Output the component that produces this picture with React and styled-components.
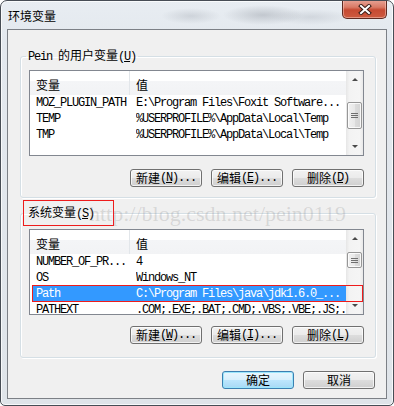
import React from "react";
import styled, { createGlobalStyle } from "styled-components";

const GlobalStyle = createGlobalStyle`
  html, body {
    margin: 0;
    padding: 0;
    background: #ffffff;
  }
  body {
    font-family: "Noto Sans CJK SC", sans-serif;
  }
  * {
    box-sizing: border-box;
  }
`;

const Window = styled.div`
  position: relative;
  width: 394px;
  height: 406px;
  display: flex;
  flex-direction: column;
  border: 1px solid #474d55;
  border-radius: 7px 7px 5px 5px;
  background:
    radial-gradient(ellipse 40px 10px at 262px 14px, rgba(150, 156, 165, 0.45), transparent),
    radial-gradient(ellipse 30px 8px at 190px 15px, rgba(160, 166, 175, 0.35), transparent),
    radial-gradient(ellipse 40px 8px at 310px 16px, rgba(170, 176, 185, 0.35), transparent),
    linear-gradient(180deg, #e8edf2 0%, #e3e8ee 10%, #dfe4e9 100%);
  box-shadow: inset 0 0 0 1px rgba(255, 255, 255, 0.75);
  overflow: hidden;
`;

const TitleBar = styled.div`
  flex: none;
  height: 28px;
  display: flex;
  align-items: flex-start;
  justify-content: space-between;
  padding: 0 6px 0 7px;
`;

const Title = styled.span`
  margin-top: 7px;
  font-size: 12px;
  line-height: 16px;
  color: #000;
`;

const CloseButton = styled.div`
  width: 45px;
  height: 19px;
  margin-top: -1px;
  display: flex;
  align-items: center;
  justify-content: center;
  border: 1px solid #5e2a21;
  border-top: none;
  border-radius: 0 0 5px 5px;
  background: linear-gradient(180deg, #e8a496 0%, #d97a66 40%, #c64a32 55%, #cd5a3f 100%);
  box-shadow: inset 0 0 0 1px rgba(255, 220, 210, 0.45);
`;

const Client = styled.div`
  flex: 1;
  display: flex;
  flex-direction: column;
  margin: 0 6px 6px 6px;
  padding: 18px 10px 0 12px;
  border: 1px solid #7c8086;
  background: #f0f0f0;
`;

const Group = styled.fieldset`
  margin: ${(p) => p.$gap || "0"} 0 0 0;
  padding: ${(p) => p.$pad};
  border: 1px solid #d5dfe5;
  border-radius: 3px;
  box-shadow: inset 1px 1px 0 #ffffff, 1px 1px 0 #ffffff;
  min-width: 0;
`;

const Legend = styled.legend`
  margin-left: ${(p) => (p.$boxed ? "-6px" : "-3px")};
  padding: ${(p) => (p.$boxed ? "4px 19px 4px 4px" : "0 2px")};
  border: ${(p) => (p.$boxed ? "1px solid #ee1c1c" : "none")};
  font-size: 12px;
  line-height: 14px;
  color: #000;
`;

const Mono = styled.span`
  font-family: "Liberation Mono", monospace;
  letter-spacing: -1.2px;
`;

const ListBox = styled.div`
  position: relative;
  height: 86px;
  display: flex;
  border: 1px solid #828790;
  background: #ffffff;
  overflow: hidden;
`;

const ListBody = styled.div`
  flex: 1;
  min-width: 0;
  display: flex;
  flex-direction: column;
`;

const Header = styled.div`
  flex: none;
  height: 24px;
  display: grid;
  grid-template-columns: 100px 1fr;
  background: linear-gradient(180deg, #ffffff 0%, #ffffff 42%, #f4f5f7 42%, #f2f3f5 100%);
  font-size: 12px;
  color: #000;
`;

const HeaderCell = styled.div`
  display: flex;
  align-items: center;
  padding: 3px 0 0 6px;
  border-right: ${(p) => (p.$divider ? "1px solid #e2e6ea" : "none")};
`;

const Row = styled.div`
  position: relative;
  flex: none;
  height: 16px;
  margin-left: 3px;
  padding-left: 3px;
  display: grid;
  grid-template-columns: 100px 1fr;
  font-family: "Liberation Mono", monospace;
  font-size: 12px;
  line-height: 16px;
  letter-spacing: -1.2px;
  white-space: nowrap;
  color: ${(p) => (p.$selected ? "#ffffff" : "#000000")};
  background: ${(p) => (p.$selected ? "#3399ff" : "transparent")};

  &::after {
    content: "";
    display: ${(p) => (p.$marked ? "block" : "none")};
    position: absolute;
    z-index: 2;
    left: -1px;
    right: -17px;
    top: -1px;
    bottom: 0;
    border: 1px solid #ee1c1c;
  }
`;

const Cell = styled.span`
  overflow: hidden;
`;

const ScrollBar = styled.div`
  flex: none;
  width: 17px;
  display: flex;
  flex-direction: column;
  background: linear-gradient(90deg, #e6e6e6 0%, #f3f3f3 20%, #f5f5f5 80%, #e9e9e9 100%);
`;

const ArrowButton = styled.div`
  flex: none;
  height: 17px;
  display: flex;
  align-items: center;
  justify-content: center;

  &::before {
    content: "";
    border-left: 3px solid transparent;
    border-right: 3px solid transparent;
    border-${(p) => (p.$down ? "top" : "bottom")}: 3px solid #4a4a4a;
  }
`;

const Track = styled.div`
  flex: 1;
  display: flex;
  flex-direction: column;
  align-items: center;
`;

const Thumb = styled.div`
  width: 15px;
  height: ${(p) => p.$height}px;
  margin-top: ${(p) => p.$top}px;
  display: flex;
  align-items: center;
  justify-content: center;
  border: 1px solid #979797;
  border-radius: 2px;
  background: linear-gradient(90deg, #f1f1f1 0%, #e8e8e8 50%, #dcdcdc 51%, #d4d4d4 100%);
  box-shadow: inset 0 0 0 1px rgba(255, 255, 255, 0.8);
`;

const Grip = styled.span`
  width: 7px;
  height: 5px;
  background: repeating-linear-gradient(180deg, #6f6f6f 0 1px, transparent 1px 2px);
`;

const ButtonRow = styled.div`
  display: flex;
  justify-content: flex-end;
  gap: 9px;
  margin-top: ${(p) => p.$top}px;
`;

const Button = styled.div`
  width: 72px;
  height: 18px;
  display: flex;
  align-items: center;
  justify-content: center;
  border: 1px solid ${(p) => (p.$default ? "#3c7fb1" : "#707070")};
  border-radius: 3px;
  background: ${(p) =>
    p.$default
      ? "linear-gradient(180deg, #eaf6fd 0%, #d9f0fc 48%, #bee6fd 50%, #a7d9f5 100%)"
      : "linear-gradient(180deg, #f2f2f2 0%, #ebebeb 48%, #dddddd 50%, #cfcfcf 100%)"};
  box-shadow: inset 0 0 0 1px ${(p) => (p.$default ? "#9ce6fb" : "rgba(255,255,255,0.7)")};
  font-size: 12px;
  line-height: 14px;
  color: #000;
  white-space: nowrap;
`;

const Footer = styled.div`
  display: flex;
  justify-content: flex-end;
  gap: 9px;
  margin-top: 13px;
  padding-right: 1px;
`;

const Watermark = styled.div`
  position: absolute;
  z-index: 3;
  left: 88px;
  top: 202px;
  font-family: "Liberation Serif", serif;
  font-size: 22px;
  line-height: 22px;
  color: rgba(110, 110, 110, 0.2);
  white-space: nowrap;
  pointer-events: none;
`;

const CloseIcon = () => (
  <svg width="14" height="11" viewBox="0 0 14 11">
    <path d="M3 2 L11 9 M11 2 L3 9" stroke="#3a1c16" strokeWidth="4" strokeLinecap="square" />
    <path d="M3 2 L11 9 M11 2 L3 9" stroke="#ffffff" strokeWidth="2" strokeLinecap="square" />
  </svg>
);

const Key = ({ k, dots }) => (
  <Mono>
    (<u>{k}</u>){dots ? "..." : ""}
  </Mono>
);

const VarList = ({ rows, thumbTop, thumbHeight }) => (
  <ListBox>
    <ListBody>
      <Header>
        <HeaderCell $divider>变量</HeaderCell>
        <HeaderCell>值</HeaderCell>
      </Header>
      {rows.map((r) => (
        <Row key={r.name} $selected={r.selected} $marked={r.marked}>
          <Cell>{r.name}</Cell>
          <Cell>{r.value}</Cell>
        </Row>
      ))}
    </ListBody>
    <ScrollBar>
      <ArrowButton />
      <Track>
        <Thumb $top={thumbTop} $height={thumbHeight}>
          <Grip />
        </Thumb>
      </Track>
      <ArrowButton $down />
    </ScrollBar>
  </ListBox>
);

const userVars = [
  { name: "MOZ_PLUGIN_PATH", value: "E:\\Program Files\\Foxit Software..." },
  { name: "TEMP", value: "%USERPROFILE%\\AppData\\Local\\Temp" },
  { name: "TMP", value: "%USERPROFILE%\\AppData\\Local\\Temp" },
];

const systemVars = [
  { name: "NUMBER_OF_PR...", value: "4" },
  { name: "OS", value: "Windows_NT" },
  { name: "Path", value: "C:\\Program Files\\java\\jdk1.6.0_...", selected: true, marked: true },
  { name: "PATHEXT", value: ".COM;.EXE;.BAT;.CMD;.VBS;.VBE;.JS;..." },
];

export default function App() {
  return (
    <>
      <GlobalStyle />
      <Window>
        <TitleBar>
          <Title>环境变量</Title>
          <CloseButton>
            <CloseIcon />
          </CloseButton>
        </TitleBar>
        <Client>
          <Group $pad="6px 11px 10px 8px">
            <Legend>
              <Mono>Pein </Mono>的用户变量<Key k="U" />
            </Legend>
            <VarList rows={userVars} thumbTop={14} thumbHeight={27} />
            <ButtonRow $top={13}>
              <Button>
                新建<Key k="N" dots />
              </Button>
              <Button>
                编辑<Key k="E" dots />
              </Button>
              <Button>
                删除<Key k="D" />
              </Button>
            </ButtonRow>
          </Group>
          <Group $gap="2px" $pad="3px 11px 13px 8px">
            <Legend $boxed>
              系统变量<Key k="S" />
            </Legend>
            <VarList rows={systemVars} thumbTop={5} thumbHeight={16} />
            <ButtonRow $top={11}>
              <Button>
                新建<Key k="W" dots />
              </Button>
              <Button>
                编辑<Key k="I" dots />
              </Button>
              <Button>
                删除<Key k="L" />
              </Button>
            </ButtonRow>
          </Group>
          <Footer>
            <Button $default>确定</Button>
            <Button>取消</Button>
          </Footer>
        </Client>
        <Watermark>http://blog.csdn.net/pein0119</Watermark>
      </Window>
    </>
  );
}
